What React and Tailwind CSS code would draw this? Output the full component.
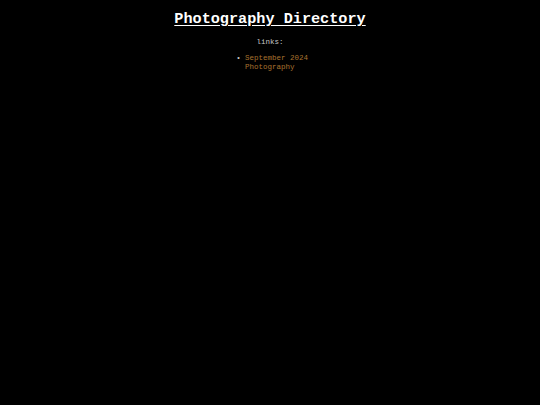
import React from 'react';

const links = [{ label: 'September 2024 Photography', href: '#' }];

export default function App() {
  return (
    <div className="min-h-screen bg-black text-center text-[#c4c4c4] font-['Courier_New','Nimbus_Mono_PS','FreeMono','Liberation_Mono',monospace]">
      <h1 className="pt-[10px] text-[15.2px] leading-[18px] font-bold text-white underline underline-offset-2">
        Photography Directory
      </h1>
      <p className="mt-[10px] text-[7.5px] leading-[9px]">links:</p>
      <ul className="mx-auto mt-[7px] w-[76px] text-left text-[7.5px] leading-[9px]">
        {links.map((l) => (
          <li key={l.label} className="flex">
            <span className="w-[13px] shrink-0 text-center">•</span>
            <a href={l.href} className="text-[#a8722f]">
              {l.label}
            </a>
          </li>
        ))}
      </ul>
    </div>
  );
}
